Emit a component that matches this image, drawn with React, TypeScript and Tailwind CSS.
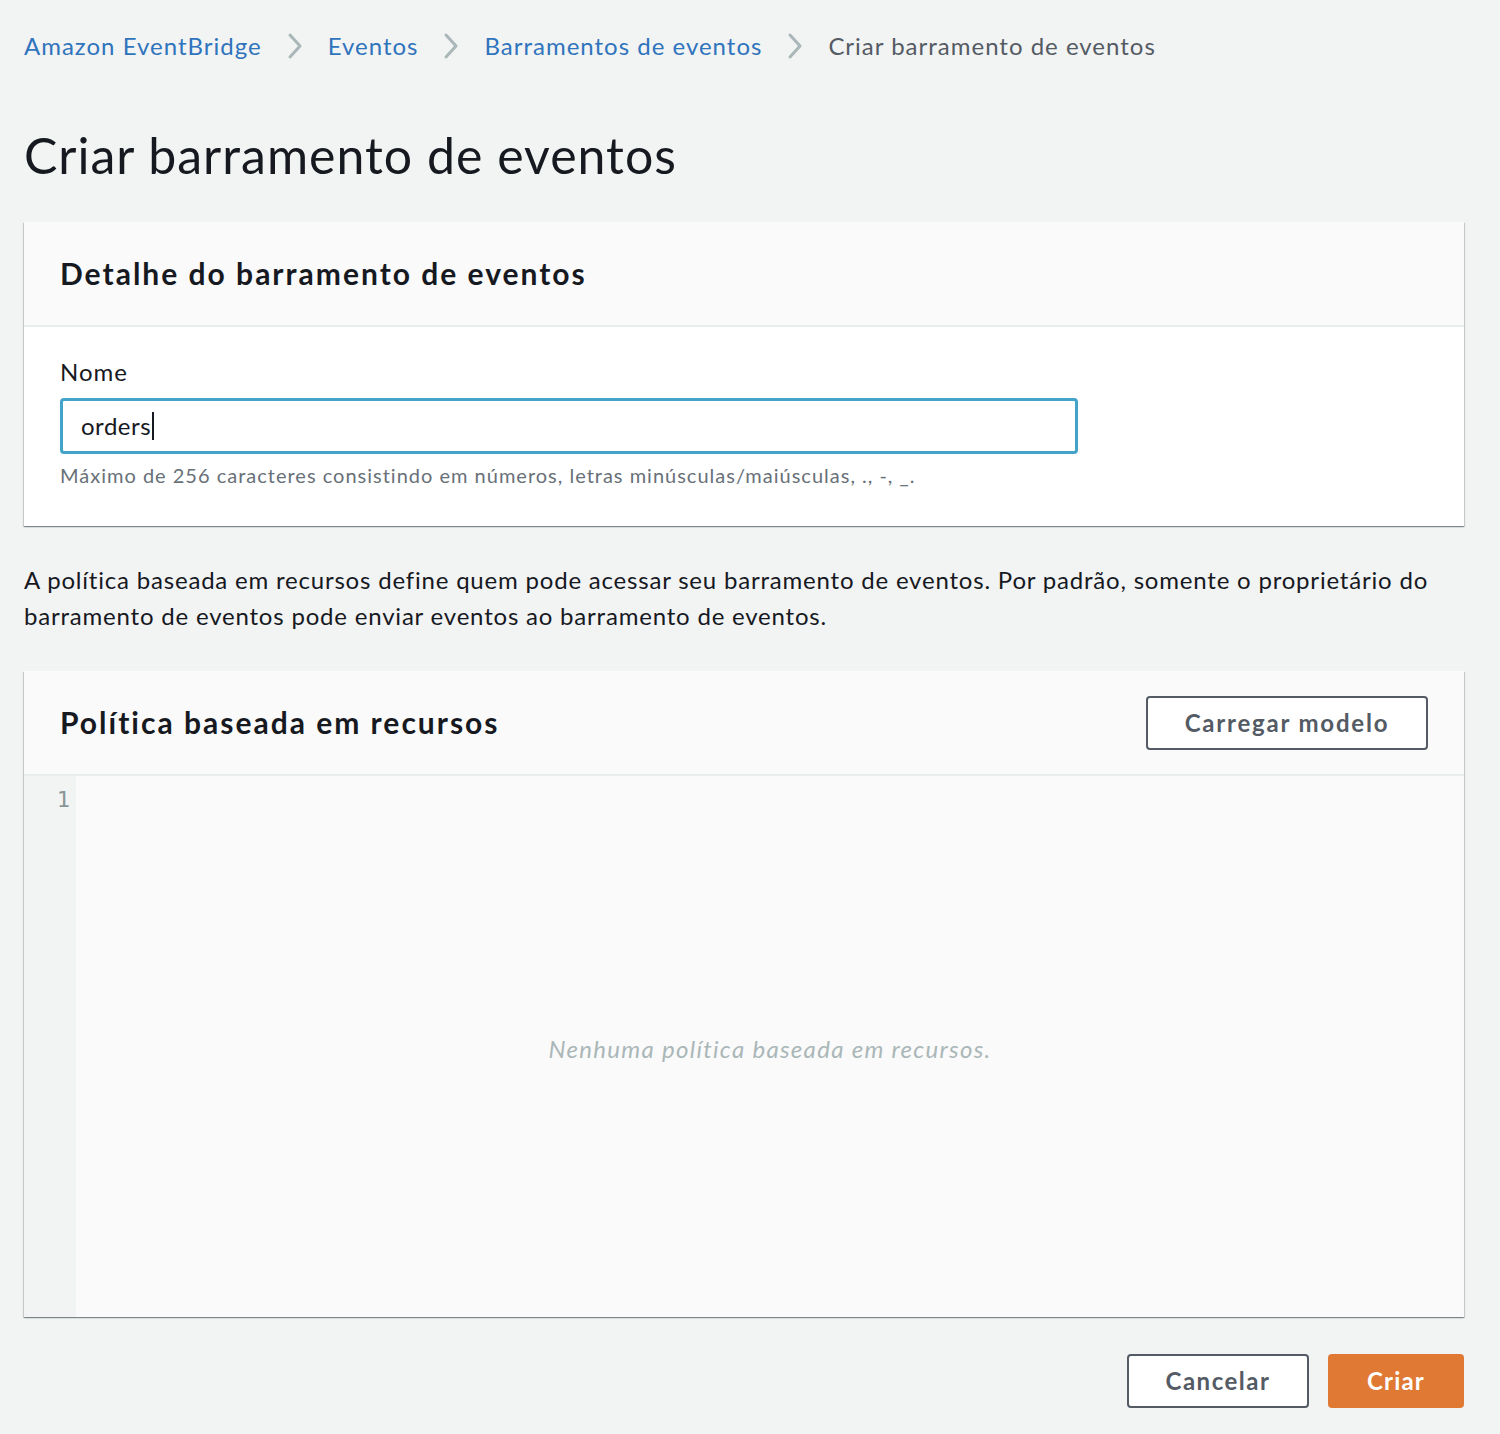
const font = { fontFamily: "Lato, 'Open Sans', sans-serif" };

const cardShadow =
  "shadow-[0_1px_1px_0_rgba(0,28,36,0.3),1px_1px_1px_0_rgba(0,28,36,0.15),-1px_1px_1px_0_rgba(0,28,36,0.15)]";

function Chevron() {
  return (
    <svg width="18" height="30" viewBox="0 0 18 30" fill="none" className="shrink-0">
      <path d="M4 4 L14 15 L4 26" stroke="#aab7b8" strokeWidth="3" strokeLinecap="round" strokeLinejoin="round" />
    </svg>
  );
}

export default function App() {
  return (
    <div className="min-h-[1434px] w-[1500px] bg-[#f2f3f3] pl-6 pr-9 text-[#16191f]" style={font}>
      <nav className="flex h-[92px] items-center gap-6 text-[24px] tracking-[1px]">
        <a className="text-[#2f74bd]">Amazon EventBridge</a>
        <Chevron />
        <a className="text-[#2f74bd]">Eventos</a>
        <Chevron />
        <a className="text-[#2f74bd]">Barramentos de eventos</a>
        <Chevron />
        <span className="text-[#545b64]">Criar barramento de eventos</span>
      </nav>

      <h1 className="flex h-[130px] items-center pt-1 pb-2 text-[50px] font-normal leading-none tracking-[1px]">
        Criar barramento de eventos
      </h1>

      <section className={`bg-white ${cardShadow}`}>
        <header className="flex h-[105px] items-center border-b-2 border-[#eaeded] bg-[#fafafa] px-9">
          <h2 className="text-[30px] font-bold tracking-[2px]">Detalhe do barramento de eventos</h2>
        </header>
        <div className="px-9 pt-[27px] pb-[36px]">
          <label className="block text-[24px] leading-[36px] tracking-[1px]">Nome</label>
          <div className="mt-[8px] flex h-[56px] w-[1018px] items-center rounded-[4px] border-[3px] border-[#44a3c9] px-[18px] text-[24px] tracking-[0.5px]">
            orders<span className="ml-px inline-block h-[28px] w-[2px] bg-[#16191f]" />
          </div>
          <p className="mt-[6px] text-[20px] leading-[30px] tracking-[1px] text-[#687078]">
            Máximo de 256 caracteres consistindo em números, letras minúsculas/maiúsculas, ., -, _.
          </p>
        </div>
      </section>

      <p className="mt-[36px] text-[24px] leading-[36px] tracking-[0.8px]">
        A política baseada em recursos define quem pode acessar seu barramento de eventos. Por padrão, somente o proprietário do barramento de eventos pode enviar eventos ao barramento de eventos.
      </p>

      <section className={`mt-[37px] bg-[#fafafa] ${cardShadow}`}>
        <header className="flex h-[105px] items-center justify-between border-b-2 border-[#eaeded] pl-9 pr-[36px]">
          <h2 className="text-[30px] font-bold tracking-[2px]">Política baseada em recursos</h2>
          <button className="h-[54px] w-[282px] rounded-[4px] border-2 border-[#545b64] bg-white text-[24px] font-bold tracking-[1.8px] text-[#545b64]">
            Carregar modelo
          </button>
        </header>
        <div className="flex h-[541px]">
          <div
            className="w-[52px] bg-[#f2f3f3] pt-[7px] pr-[6px] text-right text-[22px] text-[#879596]"
            style={{ fontFamily: "'DejaVu Sans Mono', monospace" }}
          >
            1
          </div>
          <div className="flex flex-1 items-center justify-center pt-[4px] text-[24px] italic tracking-[1.3px] text-[#aab7b8]">
            Nenhuma política baseada em recursos.
          </div>
        </div>
      </section>

      <div className="mt-[37px] flex justify-end gap-[19px]">
        <button className="h-[54px] w-[182px] rounded-[4px] border-2 border-[#545b64] bg-white text-[24px] font-bold tracking-[1.5px] text-[#545b64]">
          Cancelar
        </button>
        <button className="h-[54px] w-[136px] rounded-[4px] bg-[#e07934] text-[24px] font-bold tracking-[1.2px] text-white">
          Criar
        </button>
      </div>
    </div>
  );
}
